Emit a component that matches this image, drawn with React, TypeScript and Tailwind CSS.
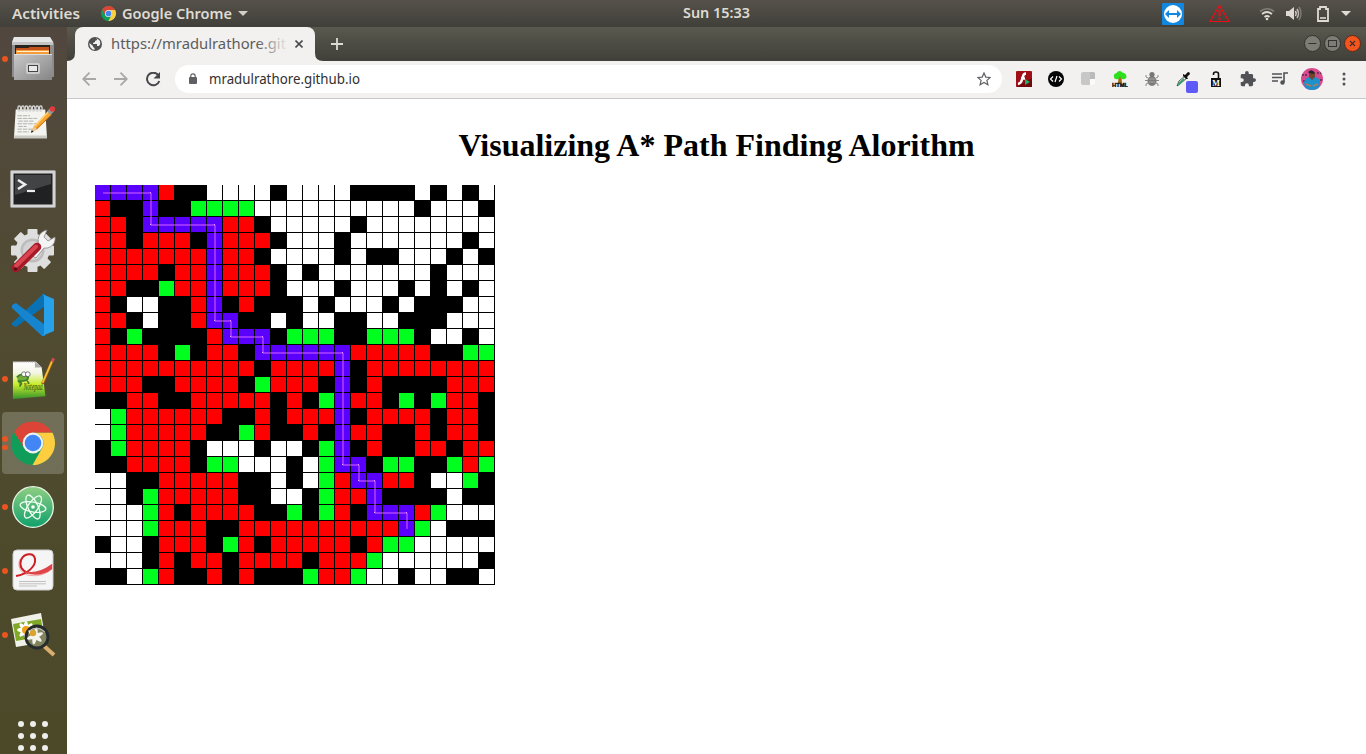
import React from "react";

const ROWS = [
  "PPPPRBBWWWWBWWWWBBBBWBWBW",
  "RBBPBBGGGGWWWWWWWWWWBWWWB",
  "RRBPPPPPRRBWWWWWBWWWWWWWW",
  "RRBRRRBPRRRBWWWBWWWWWWWBW",
  "RRRRRRRPRRBWWWWBWBBWWWBWB",
  "RRRRBRRPRRRBWBWWWWWWWBWWW",
  "RRBBGRRPRRRBWWWBWWWBWBWBW",
  "RBWWBBRPBRBBBWBWWWBWBBBWW",
  "RRBWBBRPPBBWBWWBBWWBBBWWW",
  "RBGBBBBRPPPBGGGBBGGGBWWBW",
  "RRRRBGBRRBPPPPPPRRRRRBBGG",
  "RRRRRRRRRRBRRRRPBRRRRRRRR",
  "RRRBBRRRRBGRRRBPBRBBBBRRR",
  "BBRRBBRRRRRBRBGPRRBGBGRRB",
  "WGRRRRRRBBRBRRRPBRRRRBRRB",
  "WGRRRRRBBGRBBRBPRRBBRBRRB",
  "BGRRRRBWWWBWWBGPBRBBRRBRR",
  "BBRRRRBGGWWWBWGPPBGGBBGRG",
  "WWBBRRRRRBBWBWGRPPRRBWWGB",
  "WWBGRRRRRBBWWBGRRPBBBBWBB",
  "WWWGRBRRRRBBGBGRBPPPRGWWW",
  "WWWGRRRBBRRRRRRRRRRPGWBBB",
  "BWWBRRRBGRBRRRRRBRGGWWWWW",
  "WWWBRBRRBRRRRBRRRGWWWWWWB",
  "BBWGRBBRBRBBBGRRGWWBWWBBW",
];

const FILL: Record<string, string> = {
  P: "bg-[#5a00ff]",
  R: "bg-[#ff0000]",
  G: "bg-[#00ff1e]",
  B: "bg-black",
  W: "bg-white",
};

/* Corner cells of the path, as [column, row]. */
const PATH = [[0, 0], [3, 0], [3, 2], [7, 2], [7, 8], [8, 8], [8, 9], [10, 9], [10, 10], [15, 10], [15, 17], [16, 17], [16, 18], [17, 18], [17, 20], [19, 20], [19, 21]];

function Board() {
  return (
    <div className="relative h-[400px] w-[400px]">
      <div className="grid grid-cols-[repeat(25,16px)] auto-rows-[16px]">
        {ROWS.flatMap((row, r) =>
          row.split("").map((c, i) => <div key={`${r}-${i}`} className={`border-r border-b border-black ${FILL[c]}`} />),
        )}
      </div>
      <svg className="absolute inset-0" width="400" height="400" stroke="#d864ff" fill="none">
        {PATH.slice(1).map(([x, y], i) => (
          <line key={i} x1={PATH[i][0] * 16 + 8} y1={PATH[i][1] * 16 + 8} x2={x * 16 + 8} y2={y * 16 + 8} />
        ))}
        {PATH.slice(1, -1).map(([x, y], i) => (
          <rect key={i} x={x * 16 + 7} y={y * 16 + 7} width="1" height="1" fill="#e0a8ff" stroke="none" />
        ))}
      </svg>
    </div>
  );
}

function Chrome({ size }: { size: number }) {
  return (
    <svg width={size} height={size} viewBox="0 0 44 44">
      <circle cx="22" cy="22" r="22" fill="#109d59" />
      <path d="M3 11A22 22 0 0 1 41.3 11.8H22A10.3 10.3 0 0 0 12.8 26.5Z" fill="#db4437" />
      <path d="M22 11.8H41.5A22 22 0 0 1 21.5 44L31.5 26.5A10.3 10.3 0 0 0 22 11.8Z" fill="#ffcd40" />
      <circle cx="22" cy="22" r="10.4" fill="#f1f1f1" />
      <circle cx="22" cy="22" r="8.3" fill="#4285f4" />
    </svg>
  );
}

function Files() {
  return (
    <svg width="44" height="46" viewBox="0 0 44 46">
      <defs><linearGradient id="cab" x2="1" y2="1"><stop stopColor="#c9c9c9" /><stop offset=".5" stopColor="#a7a7a7" /><stop offset="1" stopColor="#858585" /></linearGradient></defs>
      <path d="M3 1H39L43 7V41H1V7Z" fill="#8c8c8c" />
      <path d="M3 1H39L42 6H1Z" fill="#e6e6e6" />
      <path d="M1 6H42V9H1Z" fill="#c4c4c4" />
      <rect x="4" y="9" width="35" height="11" fill="#292320" />
      <path d="M5 12H17L19 11H38V19H5Z" fill="#c3521b" />
      <path d="M5 14H38V20H5Z" fill="#f49b3a" />
      <path d="M6 15.5H38" stroke="#fff0cf" />
      <path d="M3 18H41V44H3Z" fill="url(#cab)" />
      <path d="M3 18.5H41" stroke="#ddd" />
      <rect x="15" y="27" width="14" height="11" rx="2" fill="#ccc" />
      <rect x="17.5" y="29.5" width="9" height="6" fill="#e9e9e9" stroke="#444" />
    </svg>
  );
}

function Notepad() {
  return (
    <svg width="48" height="40" viewBox="0 0 48 40">
      <path d="M3 6H36L38 38H1Z" fill="#f3f3f0" />
      <path d="M1 35H38V38H1Z" fill="#c9cac4" />
      <g fill="none" stroke="#d8d8d8" strokeWidth="1.4">
        {[7, 11, 15, 19, 23, 27, 31].map((x) => <ellipse key={x} cx={x} cy="5" rx="1.5" ry="3" />)}
      </g>
      <path d="M5 13H19M5 16H27M6 19H24M5 22H28M6 25H15M5 28H25M5 31H18" stroke="#aaa" strokeDasharray="5 1" />
      <path d="M20 32L23 25L39 8L43 12L27 28Z" fill="#f7a52e" />
      <path d="M24 25L40 8" stroke="#ffd47a" strokeWidth="1.5" />
      <path d="M26 28L43 12" stroke="#b86213" />
      <path d="M20 32L23 25L27 28Z" fill="#e7c79f" />
      <path d="M20 32L21 29L23 31Z" fill="#222" />
      <path d="M38 8L42 4L46 8L42 12Z" fill="#929da0" />
      <circle cx="44" cy="5.5" r="3" fill="#e33a3d" />
    </svg>
  );
}

function Terminal() {
  return (
    <svg width="46" height="38" viewBox="0 0 46 38">
      <rect x=".5" y=".5" width="45" height="37" rx="1" fill="#d4d4d4" stroke="#9a9a9a" />
      <rect x="3.5" y="3.5" width="39" height="31" fill="#202122" />
      <path d="M5 5H41V14L5 25Z" fill="#424344" />
      <path d="M8 10L15 14.5L8 19" fill="none" stroke="#eee" strokeWidth="2.6" />
      <path d="M17 21H25" stroke="#eee" strokeWidth="2.2" />
    </svg>
  );
}

function Settings() {
  return (
    <svg width="46" height="46" viewBox="0 0 46 46">
      <g fill="#dedede">
        {[0, 45, 90, 135].map((a) => <rect key={a} x="17.5" y="1" width="10" height="43" rx="1" transform={`rotate(${a} 22.5 22.5)`} />)}
        <circle cx="22.5" cy="22.5" r="17" />
      </g>
      <circle cx="22.5" cy="22.5" r="12" fill="#bdbdbd" />
      <circle cx="22.5" cy="22.5" r="9.5" fill="#d3d3d3" />
      <path d="M21 27L29 17C26 9 31 3 37 2L34 9L38 13L45 9C46 17 39 21 34 20L26 30Z" fill="#f4f4f4" stroke="#888" strokeWidth=".8" />
      <path d="M6 40L27 19" stroke="#a61927" strokeWidth="8.5" strokeLinecap="round" />
      <path d="M6 38L26 18.5" stroke="#d94450" strokeWidth="4" strokeLinecap="round" />
      <circle cx="5.5" cy="41" r="1.8" fill="#571018" />
    </svg>
  );
}

function Code() {
  return (
    <svg width="44" height="44" viewBox="0 0 44 44">
      <path d="M1 30L32 1H34V13L5 34L1 32Z" fill="#0872b5" />
      <path d="M1 12L5 10L34 32V43H31L1 15Z" fill="#1784d0" />
      <path d="M31 1L43 6V38L31 43Q33 42 33 40V4Q33 2 31 1Z" fill="#28a1eb" />
    </svg>
  );
}

function NotepadQq() {
  return (
    <svg width="46" height="46" viewBox="0 0 46 46">
      <defs><linearGradient id="nq" x2="0" y2="1"><stop stopColor="#fff" /><stop offset=".3" stopColor="#f3f5e6" /><stop offset=".6" stopColor="#c9ed2c" /><stop offset="1" stopColor="#34942b" /></linearGradient></defs>
      <path d="M1 5H25L31 11L35 41L1 44Z" fill="url(#nq)" />
      <path d="M1 5H25" stroke="#999" strokeWidth="1.5" strokeDasharray="1 1" />
      <path d="M24 5V11H31Z" fill="#aaa" />
      <path d="M5 21Q11 15 17 21Q17 25 12 25H6Q10 26 10 28L8 31M16 25L18 28" fill="#72ad39" stroke="#3d7a28" strokeWidth="1.6" />
      <circle cx="12.5" cy="18" r="2.5" fill="#fff" stroke="#555" strokeWidth=".8" /><circle cx="16.5" cy="18" r="2.5" fill="#fff" stroke="#555" strokeWidth=".8" />
      <text x="12" y="34" fontSize="11" fontFamily="Liberation Serif" fontStyle="italic" fill="#31470e" textLength="20" lengthAdjust="spacingAndGlyphs">Notepad</text>
      <path d="M32 28L42 4" stroke="#925413" strokeWidth="3.2" /><path d="M32 27L42 4" stroke="#f5bd35" strokeWidth="2" />
      <path d="M42 5L43.5 1.5" stroke="#d44b50" strokeWidth="3" />
    </svg>
  );
}

function Atom() {
  return (
    <svg width="42" height="42" viewBox="0 0 42 42">
      <defs><linearGradient id="at" x2="0" y2="1"><stop stopColor="#8fce83" /><stop offset="1" stopColor="#10a06c" /></linearGradient></defs>
      <circle cx="21" cy="21" r="20.3" fill="url(#at)" stroke="#e8f7e6" strokeWidth="1.3" />
      <g fill="none" stroke="#edfff2" strokeWidth="1.3"><ellipse cx="21" cy="21" rx="13" ry="5" transform="rotate(10 21 21)" /><ellipse cx="21" cy="21" rx="13" ry="5" transform="rotate(65 21 21)" /><ellipse cx="21" cy="21" rx="13" ry="5" transform="rotate(125 21 21)" /></g>
      <circle cx="21" cy="21" r="1.8" fill="#fff" />
    </svg>
  );
}

function Evince() {
  return (
    <svg width="42" height="42" viewBox="0 0 42 42">
      <rect x="1" y="1" width="40" height="40" rx="4" fill="#f5f5f5" stroke="#ccc" />
      <path d="M4 27C16 25 24 17 23 10C22 3 12 4 9 11C6 19 14 25 23 24Q33 22 40 15V20Q31 28 18 26.5C8 25 5 17 8 10" fill="none" stroke="#f0aaab" strokeWidth="1" />
      <path d="M4 27C16 25 24 17 23 10C22 3 12 4 9 11C7 17 10 22 16 24" fill="none" stroke="#cf1f26" strokeWidth="2" />
      <path d="M13 22Q24 26 40 15V20Q29 29 13 24Z" fill="#df4448" />
      <path d="M7 32.5H34M7 34.8H34M7 37H25" stroke="#c0c0c0" />
    </svg>
  );
}

function Viewer() {
  return (
    <svg width="46" height="46" viewBox="0 0 46 46">
      <path d="M1 7L31 1L36 30L6 35Z" fill="#f0f1e9" />
      <path d="M3 12L31 7L34 24L6 29Z" fill="#80a927" />
      <g fill="#fff">{[0, 45, 90, 135].map((a) => <ellipse key={a} cx="16" cy="18" rx="2.7" ry="9" transform={`rotate(${a} 16 18)`} />)}</g>
      <circle cx="16" cy="18" r="4" fill="#eda017" />
      <path d="M34 34L44 43" stroke="#d9ae70" strokeWidth="4" />
      <circle cx="27" cy="25" r="11" fill="#80835e" stroke="#262b2d" strokeWidth="3" />
      <g fill="#f4f4ee">{[10, 70, 130].map((a) => <ellipse key={a} cx="25" cy="24" rx="2.3" ry="8.5" transform={`rotate(${a} 25 24)`} />)}</g>
      <circle cx="23" cy="21" r="3.2" fill="#dca42d" />
      <path d="M19 19Q27 13 35 20" fill="none" stroke="#c3c8bd" />
    </svg>
  );
}

function DockItem({ children, dots = 0, active = false, shift = "" }: { children: React.ReactNode; dots?: number; active?: boolean; shift?: string }) {
  return (
    <div className="flex h-16 shrink-0 items-center">
      <div className={`flex h-[62px] w-[62px] items-center rounded ${active ? "bg-[#fff]/20" : ""}`}>
        <div className="flex w-[6px] flex-col items-center gap-[3px]">
          {Array.from({ length: dots }, (_, i) => <span key={i} className="h-[5.5px] w-[5.5px] rounded-full bg-[#e95420]" />)}
        </div>
        <div className={`ml-[2px] flex w-[46px] justify-center ${shift}`}>{children}</div>
      </div>
    </div>
  );
}

function Dock() {
  return (
    <aside className="flex w-[67px] shrink-0 flex-col overflow-hidden bg-linear-to-b from-[#51473f] via-[#504b31] via-40% to-[#4b4928] pl-[2px]">
      <DockItem dots={1}><Files /></DockItem>
      <DockItem shift="pb-[3px] pl-[3px]"><Notepad /></DockItem>
      <DockItem shift="pt-[3px]"><Terminal /></DockItem>
      <DockItem><Settings /></DockItem>
      <DockItem><Code /></DockItem>
      <DockItem dots={1} shift="pl-[2px]"><NotepadQq /></DockItem>
      <DockItem dots={2} active><Chrome size={44} /></DockItem>
      <DockItem dots={1}><Atom /></DockItem>
      <DockItem dots={1} shift="pb-[2px]"><Evince /></DockItem>
      <DockItem dots={1}><Viewer /></DockItem>
      <div className="mt-[54px] ml-4 grid grid-cols-3 gap-[6px] self-start">
        {Array.from({ length: 9 }, (_, i) => <span key={i} className="h-[6px] w-[6px] rounded-full bg-[#eeeeec]" />)}
      </div>
    </aside>
  );
}

function TopBar() {
  return (
    <header className="flex h-[27px] shrink-0 items-center bg-linear-to-b from-[#56524b] to-[#403f39] font-['Noto_Sans',sans-serif] text-[13.5px] font-semibold text-[#dfdbd2]">
      <div className="flex w-[683px] items-center pl-3">
        <svg width="69" height="20"><text y="15" textLength="68" lengthAdjust="spacingAndGlyphs" fill="currentColor">Activities</text></svg>
        <span className="ml-5 mr-[6px]"><Chrome size={15} /></span>
        <svg width="111" height="20"><text y="15" textLength="110" lengthAdjust="spacingAndGlyphs" fill="currentColor">Google Chrome</text></svg>
        <svg className="ml-[5px]" width="10" height="6"><path d="M0 0H10L5 5Z" fill="#d3d0c8" /></svg>
      </div>
      <svg width="68" height="20"><text y="14" textLength="67" lengthAdjust="spacingAndGlyphs" fill="currentColor">Sun 15:33</text></svg>
      <div className="flex flex-1 items-center justify-end pr-[15px]">
        <svg width="22" height="22"><rect width="22" height="22" rx="1" fill="#1287df" /><circle cx="11" cy="11" r="9" fill="#fff" /><path d="M3 11L7 7V10H15V7L19 11L15 15V12H7V15Z" fill="#1287df" /></svg>
        <svg className="ml-[25px]" width="21" height="19"><path d="M10.5 1.5L20 17.5H1Z" fill="none" stroke="#f00d14" strokeWidth="1.2" /><path d="M10.5 6V12.5M10.5 14V16" stroke="#f00d14" strokeWidth="2" /></svg>
        <svg className="ml-[29px]" width="16" height="14" fill="none" stroke="#dfdbd2" strokeWidth="1.7"><path d="M1 4.5Q8 -1 15 4.5" opacity=".35" /><path d="M3 7Q8 3 13 7M5.5 10Q8 8 10.5 10" /><circle cx="8" cy="12" r="1.3" fill="#dfdbd2" stroke="none" /></svg>
        <svg className="ml-[11px]" width="16" height="15" fill="none" stroke="#dfdbd2" strokeWidth="1.5"><path d="M0 5H3L8 1V14L3 10H0Z" fill="#dfdbd2" stroke="none" /><path d="M9.5 5Q11 7.5 9.5 10" /><path d="M11 3Q14 7.5 11 12" opacity=".8" /><path d="M13 1Q17 7.5 13 14" opacity=".35" /></svg>
        <svg className="ml-[15px]" width="12" height="16"><path d="M1 3H3V1H9V3H11V15H1Z" fill="none" stroke="#dfdbd2" strokeWidth="1.8" /><path d="M3 12H9" stroke="#dfdbd2" strokeWidth="1.6" /></svg>
        <svg className="ml-[12px]" width="10" height="6"><path d="M0 0H10L5 5Z" fill="#dfdbd2" /></svg>
      </div>
    </header>
  );
}

function WindowButtons() {
  return (
    <div className="ml-auto flex gap-[3px] pt-2 pr-[5px]">
      <svg width="17" height="17"><circle cx="8.5" cy="8.5" r="8" fill="#7e7d75" stroke="#34332f" /><path d="M4.5 8.5H12.5" stroke="#34332f" /></svg>
      <svg width="17" height="17"><circle cx="8.5" cy="8.5" r="8" fill="#7e7d75" stroke="#34332f" /><rect x="4.5" y="5.5" width="8" height="6" fill="none" stroke="#34332f" /></svg>
      <svg width="17" height="17"><circle cx="8.5" cy="8.5" r="8" fill="#f4551d" stroke="#5b2b19" /><path d="M6 6L11 11M11 6L6 11" stroke="#3d3028" strokeWidth="1.1" /></svg>
    </div>
  );
}

function TabStrip() {
  return (
    <div className="flex h-[34px] shrink-0 bg-linear-to-b from-[#5a594f] to-[#403f39]">
      <svg className="self-end" width="8" height="8"><path d="M0 8Q8 8 8 0V8Z" fill="#f2f1f0" /></svg>
      <div className="flex w-[240px] items-center rounded-t-lg bg-[#f2f1f0] pl-[13px]">
        <svg width="14" height="14" viewBox="0 0 14 14"><circle cx="7" cy="7" r="7" fill="#505153" /><path d="M1.5 6L5 9V10L6.5 11V13A6 6 0 0 1 1.5 6M7 1.5H9V3L7 4V5L5 6V7H9V9H11Q13 7 12 4Q10 1 7 1.5" fill="#f2f1f0" /></svg>
        <svg className="ml-[9px]" width="176" height="24">
          <defs><linearGradient id="fade" gradientUnits="userSpaceOnUse" x1="0" x2="178"><stop offset=".82" stopColor="#5b5b5b" /><stop offset="1" stopColor="#5b5b5b" stopOpacity="0" /></linearGradient></defs>
          <text y="17" textLength="175" lengthAdjust="spacingAndGlyphs" className="font-['Noto_Sans',sans-serif] text-[14px]" fill="url(#fade)">https://mradulrathore.git</text>
        </svg>
        <svg className="ml-[8px]" width="8" height="8"><path d="M.5 .5L7.5 7.5M7.5 .5L.5 7.5" stroke="#4a4b4d" strokeWidth="1.6" /></svg>
      </div>
      <svg className="self-end" width="8" height="8"><path d="M8 8Q0 8 0 0V8Z" fill="#f2f1f0" /></svg>
      <svg className="mt-[11px] ml-2" width="12" height="12"><path d="M0 6H12M6 0V12" stroke="#dddcd4" strokeWidth="1.8" /></svg>
      <WindowButtons />
    </div>
  );
}

const stroke = { fill: "none", strokeWidth: 1.8 };

function Extensions() {
  return (
    <div className="flex items-center gap-4 pl-[14px]">
      <svg width="16" height="16"><rect width="16" height="16" rx="1" fill="#9f1016" /><path d="M0 16L16 7V16Z" fill="#72090d" /><path d="M10 2.5Q7.5 2.5 6.8 6L5.8 9Q5 12.5 2 13M5 7.5H9" {...stroke} stroke="#fff" strokeWidth="2.4" /><path d="M9 8L14 11L9 14Z" fill="#18b36a" /></svg>
      <svg width="16" height="16"><circle cx="8" cy="8" r="8" fill="#050505" /><path d="M5 5.5L2.5 8L5 10.5M11 5.5L13.5 8L11 10.5M9 5L7 11" {...stroke} strokeWidth="1.2" stroke="#fff" /></svg>
      <svg width="16" height="16"><path d="M3 1H13Q15 1 15 3V8H10V14H3Q1 14 1 12V3Q1 1 3 1Z" fill="#c7c7c7" /><path d="M6 1H10V8H15V3Q15 1 13 1Z" fill="#bababa" /><path d="M10 8H15V12Q15 14 13 14H10Z" fill="#fafafa" /></svg>
      <svg width="16" height="16"><path d="M6.5 6H9.5L10 12H6Z" fill="#a56a1d" /><path d="M2 6Q1 3 4.5 2Q7 -1.5 10.5 1.5Q14 2 14.5 5.5Q14 9 10 8L8 6L6.5 8Q2 9 2 6" fill="#2ee01b" /><text x="0" y="15.5" fontSize="5.5" fontWeight="900" fontFamily="Liberation Sans" textLength="16" lengthAdjust="spacingAndGlyphs" fill="#111" stroke="#111" strokeWidth=".4">HTML</text></svg>
      <svg width="16" height="16"><g stroke="#8a8a8a" fill="none"><path d="M4 7L2 6V4M12 7L14 6V4M4 9.5H1M12 9.5H15M4 12L2 13V15M12 12L14 13V15" /></g><circle cx="8" cy="3.5" r="2.6" fill="#777" /><ellipse cx="8" cy="10" rx="4.5" ry="5" fill="#7c7c7c" /><path d="M5 8H11M5 11H11" stroke="#a3a3a3" /></svg>
      <svg width="22" height="22" viewBox="0 0 22 22" className="-mr-[6px] translate-y-[3px]"><path d="M1 15L3 10L9 5L11 7L5 12Z" fill="#e7efeb" stroke="#333" strokeWidth=".8" /><path d="M2 14L8 8" stroke="#35a06c" strokeWidth="2" /><path d="M7 3L9 4L12 1Q14 1 14 3L11 6L12 8L10 8L7 5Z" fill="#111" /><rect x="10" y="10" width="12" height="12" rx="2" fill="#5d5af7" /></svg>
      <svg width="16" height="16"><rect x="3" y="7" width="10" height="9" fill="#111" /><path d="M5.5 4V3Q5.5 1 8 1Q10.5 1 10.5 3V8" {...stroke} strokeWidth="1.6" stroke="#111" /><text x="8" y="14.5" fontSize="8" fontWeight="700" fontFamily="Liberation Serif" textAnchor="middle" fill="#fff">M</text></svg>
      <svg width="16" height="16" viewBox="1 1 22 22"><path d="M20.5 11H19V7c0-1.1-.9-2-2-2h-4V3.5a2.5 2.5 0 0 0-5 0V5H4c-1.1 0-2 .9-2 2v3.8h1.5a2.7 2.7 0 0 1 0 5.4H2V20c0 1.1.9 2 2 2h3.8v-1.5a2.7 2.7 0 0 1 5.4 0V22H17c1.1 0 2-.9 2-2v-4h1.5a2.5 2.5 0 0 0 0-5Z" fill="#505255" /></svg>
      <svg width="16" height="16"><path d="M0 3H10M0 6.5H10M0 10H6M12 11V2H16" {...stroke} strokeWidth="1.6" stroke="#505255" /><circle cx="10.5" cy="11.5" r="2.2" fill="#505255" /></svg>
      <svg width="22" height="22" className="-ml-[3px]"><defs><clipPath id="avatar"><circle cx="11" cy="11" r="11" /></clipPath></defs><g clipPath="url(#avatar)"><rect width="22" height="22" fill="#d9498e" /><path d="M1 7H6M16 5H21M2 13H5M16 12H22" stroke="#76365b" strokeWidth="2" strokeDasharray="2 1" /><path d="M4 22L3 14Q5 9 9 9H13Q18 9 19 14L17 22Z" fill="#1c91cb" /><path d="M8 5Q11 2 14 5V9L11 12L8 9Z" fill="#71452e" /><path d="M7 4Q11 0 14 5L12 6L8 5Z" fill="#27252a" /><path d="M5 16L10 18M17 16L12 18" stroke="#b47a58" strokeWidth="1.5" /></g></svg>
      <svg width="4" height="16" className="ml-[3px]" fill="#505255"><circle cx="2" cy="3" r="1.5" /><circle cx="2" cy="8" r="1.5" /><circle cx="2" cy="13" r="1.5" /></svg>
    </div>
  );
}

function Toolbar() {
  return (
    <div className="flex h-[38px] shrink-0 items-center border-b border-[#c8c8c8] bg-[#f2f1f0] pb-px pl-[15px]">
      <svg width="14" height="14" {...stroke} stroke="#a8a8a8"><path d="M14 7H1M7.5 .7L1.2 7L7.5 13.3" /></svg>
      <svg className="ml-[18px]" width="14" height="14" {...stroke} stroke="#a8a8a8"><path d="M0 7H13M6.5 .7L12.8 7L6.5 13.3" /></svg>
      <svg className="ml-[18px]" width="15" height="15" viewBox="0 0 15 15"><path d="M12.2 3A6.3 6.3 0 1 0 13.3 9" fill="none" stroke="#46484b" strokeWidth="2" /><path d="M14 0V6.5H7.5Z" fill="#46484b" /></svg>
      <div className="ml-[14px] flex h-7 w-[827px] items-center rounded-full bg-white pl-[14px] pr-[11px]">
        <svg width="8" height="12"><rect y="4" width="8" height="7" rx="1" fill="#5f6063" /><path d="M1.8 5V3Q1.8 .8 4 .8Q6.2 .8 6.2 3V5" fill="none" stroke="#5f6063" strokeWidth="1.2" /></svg>
        <svg className="ml-3" width="155" height="24"><text y="17" textLength="151" lengthAdjust="spacingAndGlyphs" className="font-['Noto_Sans',sans-serif] text-[14px]" fill="#303030">mradulrathore.github.io</text></svg>
        <svg className="ml-auto" width="14" height="14" viewBox="0 0 14 14"><path d="M7 1L8.8 5.1L13.2 5.5L9.9 8.4L10.9 12.8L7 10.5L3.1 12.8L4.1 8.4L.8 5.5L5.2 5.1Z" fill="none" stroke="#606265" strokeWidth="1.2" /></svg>
      </div>
      <Extensions />
    </div>
  );
}

export default function App() {
  return (
    <div className="flex h-[754px] w-[1366px] flex-col overflow-hidden bg-white">
      <TopBar />
      <div className="flex min-h-0 flex-1">
        <Dock />
        <div className="flex min-w-0 flex-1 flex-col">
          <TabStrip />
          <Toolbar />
          <main className="flex-1 bg-white pt-[28px] pl-7">
            <h1 className="mb-[21px] pr-7 text-center font-['Liberation_Serif',serif] text-[32px] leading-[37px] font-bold text-black">Visualizing A* Path Finding Alorithm</h1>
            <Board />
          </main>
        </div>
      </div>
    </div>
  );
}
